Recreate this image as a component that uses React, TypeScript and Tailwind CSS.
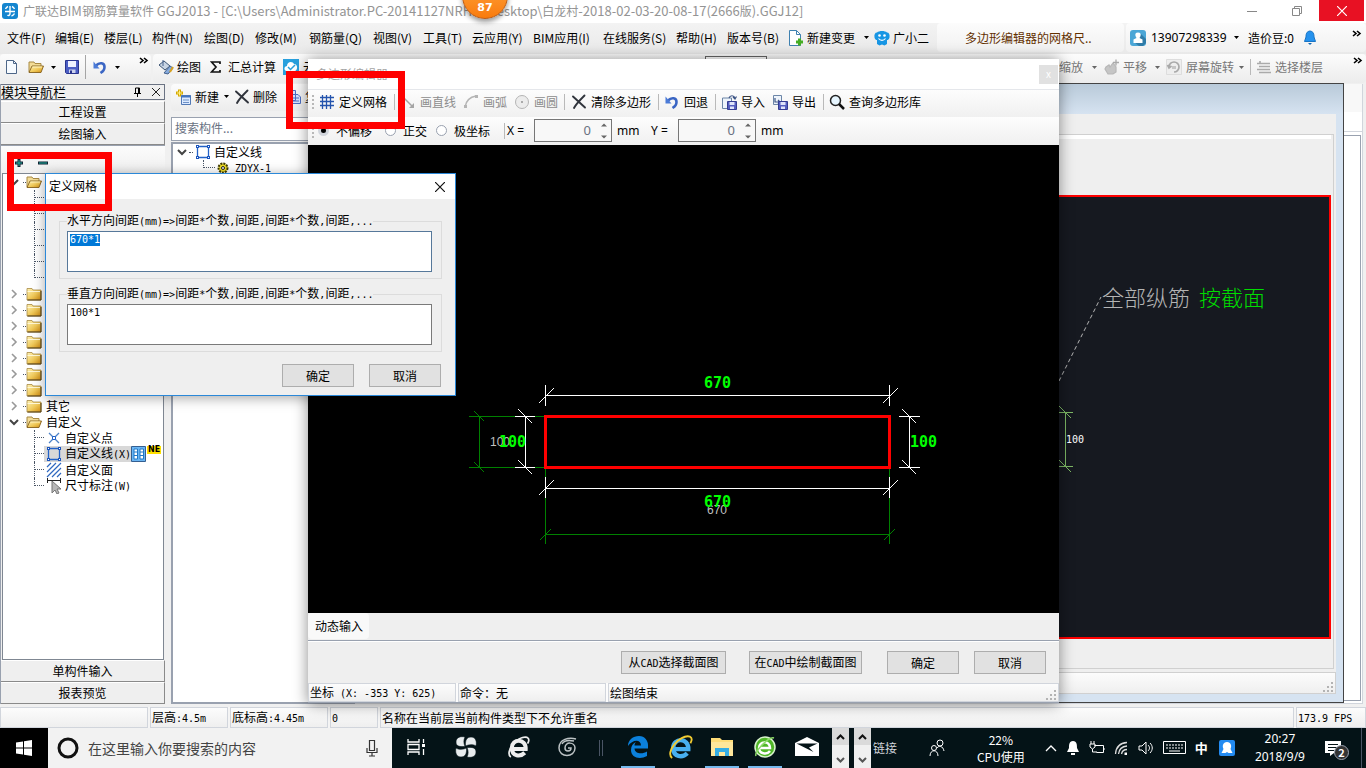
import { useEffect, useRef, type ReactNode } from 'react';

const MONO = "'DejaVu Sans Mono', 'Liberation Mono', monospace";

/* Chinese text with its Latin runs set in a half-width face */
function Song({ text }: { text: string }) {
  return (
    <>
      {text.split(/([\x20-\x7e]+)/).map((part, i) =>
        i % 2 ? (
          <span key={i} className="whitespace-pre font-['DejaVu_Sans_Mono',monospace] text-[10px]">
            {part}
          </span>
        ) : (
          part
        ),
      )}
    </>
  );
}

function Icon({ children, w = 16, h = 16 }: { children: ReactNode; w?: number; h?: number }) {
  return (
    <svg width={w} height={h} viewBox={`0 0 ${w} ${h}`} fill="none" className="shrink-0" aria-hidden="true">
      {children}
    </svg>
  );
}

const Caret = ({ gray = false }: { gray?: boolean }) => (
  <Icon w={7} h={5}>
    <path d="M1 1h5L3.5 4z" fill={gray ? '#666' : '#000'} />
  </Icon>
);
const More = () => (
  <Icon w={10} h={8}>
    <path d="M1 1l3 2.500L1 6M5 1l3 2.500L5 6" stroke="#000" strokeWidth="1.600" />
  </Icon>
);
const Sep = () => <span className="h-4 w-px shrink-0 bg-[#b9b9b9]" />;

const Gradients = () => (
  <svg width="0" height="0" className="absolute" aria-hidden="true">
    <linearGradient id="folder" x1="0" y1="0" x2="1" y2="1">
      <stop offset="0" stopColor="#fff3b8" />
      <stop offset="0.550" stopColor="#efc858" />
      <stop offset="1" stopColor="#cf8a10" />
    </linearGradient>
  </svg>
);

const FolderIcon = () => (
  <Icon>
    <path d="M1 2.500h5l1 1.500h8v10H1z" fill="url(#folder)" stroke="#a88a45" strokeWidth="0.800" />
    <path d="M1.500 5.500H14" stroke="#fff7d5" />
    <path d="M1.500 14h13.500V5" stroke="#4e3b13" />
  </Icon>
);
const FolderOpenIcon = () => (
  <Icon>
    <path d="M1 13V3h5l1 1.500h6V7" fill="#f3dc97" stroke="#a88a45" />
    <path d="M1 13.500L4 7h11.500L13 13.500z" fill="url(#folder)" stroke="#85601c" strokeWidth="0.900" />
    <path d="M4.500 8H14" stroke="#fff2bd" />
  </Icon>
);
const RectIcon = () => (
  <Icon>
    <path d="M2.500 2.500h11v11h-11z" stroke="#2262c8" strokeWidth="1.300" />
    <path d="M1 1h3v3H1zM12 1h3v3h-3zM1 12h3v3H1zM12 12h3v3h-3z" fill="#1b55bd" />
    <path d="M2 2h1v1H2zM13 2h1v1h-1zM2 13h1v1H2zM13 13h1v1h-1z" fill="#fff" />
  </Icon>
);
const UndoIcon = () => (
  <Icon>
    <path d="M4 6.500C7.500 3 12.500 3.500 12.500 8c0 3-1.500 4.500-4 6" stroke="#3b66c4" strokeWidth="2.600" />
    <path d="M1.500 2.500v7h6z" fill="#4b7bd8" />
  </Icon>
);
const CrossIcon = () => (
  <Icon>
    <path d="M2 2.500l12 11M13.500 1.500C9 6 5 10 3 14" stroke="#30343c" strokeWidth="1.900" strokeLinecap="round" />
  </Icon>
);
const DiskIcon = () => (
  <Icon>
    <path d="M1.500 1.500h13v13h-12l-1-1z" fill="#4c5ec4" stroke="#29348e" />
    <path d="M4 2h8v6H4z" fill="#eef1ff" />
    <path d="M5 10.500h6.500V14H5z" fill="#cdd3ee" />
    <path d="M6 11.500h2V14H6z" fill="#29348e" />
  </Icon>
);
const ImportIcon = ({ flip = false }: { flip?: boolean }) => (
  <Icon>
    <path d={flip ? 'M1.500 1.500h8v9h-8z' : 'M1.500 4h9v10.500h-9z'} fill="#eef4fb" stroke="#6c86a8" />
    <path d={flip ? 'M3 4v4h5M6 6l2 2-2 2' : 'M8 4c1-3 5-3 6 0M12 3l2 2 1.500-2.500'} stroke="#3d5585" strokeWidth="1.200" />
    <path d="M6.500 7.500h9v8h-9z" fill="#555fc0" stroke="#343c92" />
    <path d="M8.500 8h5v3h-5zM9 12.500h4V15H9z" fill="#dfe4fa" />
  </Icon>
);
const NewDocIcon = () => (
  <Icon>
    <path d="M2.500 1.500h7l3 3v10h-10z" fill="#f7fbff" stroke="#4d6688" />
    <path d="M9.500 1.500v3h3" stroke="#4d6688" />
  </Icon>
);
const Grip = () => (
  <Icon w={3} h={14}>
    <path d="M0 1h2M0 5h2M0 9h2M0 13h2" stroke="#b8b8b8" strokeWidth="2" />
  </Icon>
);
const SizeGrip = () => (
  <Icon w={12} h={12}>
    <path d="M8 1h2v2H8zM4 5h2v2H4zM8 5h2v2H8zM0 9h2v2H0zM4 9h2v2H4zM8 9h2v2H8z" fill="#b3b3b3" />
  </Icon>
);

const MENUS: [string, string][] = [
  ['文件(F)', 'w-12'],
  ['编辑(E)', 'w-[49px]'],
  ['楼层(L)', 'w-12'],
  ['构件(N)', 'w-[52px]'],
  ['绘图(D)', 'w-[51px]'],
  ['修改(M)', 'w-[54px]'],
  ['钢筋量(Q)', 'w-16'],
  ['视图(V)', 'w-[50px]'],
  ['工具(T)', 'w-[49px]'],
  ['云应用(Y)', 'w-[61px]'],
  ['BIM应用(I)', 'w-[70px]'],
  ['在线服务(S)', 'w-[73px]'],
  ['帮助(H)', 'w-[51px]'],
  ['版本号(B)', 'w-[60px]'],
];

function TitleBar() {
  return (
    <header className="flex h-[23px] items-start bg-white">
      <div className="flex h-[22px] flex-1 items-center gap-[5px] pl-0.5">
        <Icon>
          <rect width="16" height="16" rx="3" fill="#1485cf" />
          <path d="M3 8.500h10M8 3v7.500c0 2-1.500 2.500-2.500 1.500M10 3.500A5 5 0 0 1 12.500 6M6 3.500A5 5 0 0 0 3.500 6M12.500 10.500a5 5 0 0 1-3 2.500" stroke="#fff" strokeWidth="1.400" />
        </Icon>
        <h1 className="whitespace-pre text-[#949494]">
          广联达<span className="text-[13px]">BIM</span>钢筋算量软件
          <span className="text-[13px]">{' GGJ2013 - [C:\\Users\\Administrator.PC-20141127NRHM\\Desktop\\'}</span>
          白龙村<span className="text-[13px]">-2018-02-03-20-08-17(2666</span>版<span className="text-[13px]">).GGJ12]</span>
        </h1>
      </div>
      <button aria-label="最小化" className="flex h-[21px] w-[45px] items-center justify-center">
        <Icon w={10} h={10}><path d="M0 5.500h10" stroke="#888" /></Icon>
      </button>
      <button aria-label="还原" className="flex h-[21px] w-[45px] items-center justify-center">
        <Icon w={10} h={10}><path d="M.5 2.500h7v7h-7zM2.500 2V.5h7v7H8" stroke="#888" /></Icon>
      </button>
      <button aria-label="关闭" className="mr-0.5 flex h-[21px] w-[45px] items-center justify-center bg-[#e81123]">
        <Icon w={10} h={10}><path d="M0 0l10 10M10 0L0 10" stroke="#fff" strokeWidth="1.200" /></Icon>
      </button>
    </header>
  );
}

function MenuBar() {
  return (
    <nav className="flex h-[31px] items-center bg-gradient-to-b from-[#f3f3f3] to-[#e9e9e9] pb-0.5 pl-[7px]">
      {MENUS.map(([label, w]) => (
        <button key={label} className={`${w} shrink-0 whitespace-nowrap text-left`}>{label}</button>
      ))}
      <button className="flex w-[87px] shrink-0 items-center gap-1 whitespace-nowrap">
        <Icon>
          <path d="M2.500.5h7l4 4v11h-11z" fill="#fff" stroke="#3f81b0" />
          <path d="M9.500.5v4h4" stroke="#3f81b0" />
          <path d="M9 12h7M12.500 8.500v7" stroke="#45ad24" strokeWidth="3" />
        </Icon>
        新建变更
        <span className="ml-1"><Caret /></span>
      </button>
      <button className="flex w-[63px] shrink-0 items-center gap-[3px] whitespace-nowrap">
        <Icon>
          <path d="M3 2.500C5 .5 11 .5 13 2.500c2 0 3 2 2.500 5-.5 2-1.500 2.500-2.500 2.500v4l-2.500 1.500L8 14.500l-2.500 1L3 14v-4C2 10 1 9.500.5 7.500 0 4.500 1 2.500 3 2.500z" fill="#1896e4" />
          <circle cx="5.500" cy="5.500" r="1.300" fill="#fff" />
          <circle cx="10.500" cy="5.500" r="1.300" fill="#fff" />
          <path d="M4.500 8.500c2 2.500 5 2.500 7 0" stroke="#fff" strokeWidth="1.200" />
        </Icon>
        广小二
      </button>
      <div className="flex h-full min-w-0 flex-1 items-center rounded bg-gradient-to-b from-[#fcfcfc] to-[#f1f1f1] pl-7 text-[#633000]">
        <a href="#news" className="truncate">多边形编辑器的网格尺..</a>
      </div>
      <div className="ml-0.5 flex h-full w-[240px] shrink-0 items-center rounded bg-gradient-to-b from-[#fcfcfc] to-[#f1f1f1] pl-1 pr-1">
        <Icon>
          <rect width="16" height="16" rx="3" fill="#4ba6d6" />
          <path d="M11 4l5 5v4l-3 3H9l-5-4z" fill="#2f7ca8" />
          <path d="M8 2.500c2.500 0 3 1.500 2.500 3.500L9.500 8l3 1.500V13h-9V9.500l3-1.500-1-2C5 4 5.500 2.500 8 2.500z" fill="#fff" />
        </Icon>
        <button className="ml-[5px] flex w-[97px] items-center justify-between pr-2 font-['Noto_Sans',sans-serif]">13907298339 <Caret /></button>
        <span className="mr-2 whitespace-nowrap">造价豆:0</span>
        <button aria-label="通知">
          <Icon>
            <path d="M8 1c3.500.5 4 3 4 6l1.500 4.500h-11L4 7c0-3 .5-5.500 4-6z" fill="#2592ee" stroke="#1874c5" />
            <path d="M6 13h4l-2 2z" fill="#1367b0" />
          </Icon>
        </button>
        <span className="ml-auto -mt-2"><More /></span>
      </div>
    </nav>
  );
}

function MainToolbar() {
  const strip = 'flex h-[29px] items-center rounded bg-gradient-to-b from-[#fcfcfc] to-[#ececec] pb-[3px]';
  return (
    <div className="flex h-[30px] items-start bg-[#f0f0f0]">
      <div className={`${strip} w-[151px] shrink-0 pl-1`}>
        <button aria-label="新建文件" className="w-6"><NewDocIcon /></button>
        <button aria-label="打开" className="w-[22px]"><FolderOpenIcon /></button>
        <span className="w-3.5"><Caret /></span>
        <button aria-label="保存" className="w-[21px]"><DiskIcon /></button>
        <span className="h-6 w-px bg-[#a5a5a5]" />
        <button aria-label="撤销" className="ml-1.5 w-[22px]"><UndoIcon /></button>
        <Caret />
        <span className="-mt-3 ml-auto mr-0.5"><More /></span>
      </div>
      <div className={`${strip} ml-0.5 flex-1 pl-[5px]`}>
        <button className="flex w-[52px] shrink-0 items-center gap-[3px] whitespace-nowrap">
          <Icon>
            <path d="M1 6l5-4 6 5-5 4z" fill="#c9d5e4" stroke="#3e5675" />
            <path d="M5 1v6M12 7l3 2-5 6-4-1z" stroke="#44618c" fill="#86abdd" />
            <path d="M12 13l3-5" stroke="#d7a220" strokeWidth="2" />
          </Icon>
          绘图
        </button>
        <button className="flex w-[73px] shrink-0 items-center gap-[7px] whitespace-nowrap">
          <Icon w={11} h={12}><path d="M10 3V1H1.500L6 6l-4.500 5H10V9" stroke="#111" strokeWidth="1.700" /></Icon>
          汇总计算
        </button>
        <button className="flex w-14 shrink-0 items-center gap-1 whitespace-nowrap">
          <Icon>
            <rect width="16" height="16" fill="#28a0dd" />
            <path d="M3 12c-3-2-1-5 1-5 0-5 6-5 7-2 4 0 4 6 1 7z" fill="#fff" />
            <path d="M5 8l2.500 2.500L12 6" stroke="#28a0dd" strokeWidth="1.500" />
          </Icon>
          云检查
        </button>
        <select aria-label="楼层" className="ml-[366px] h-[23px] w-[62px] shrink-0 border border-[#666] bg-white" />
        <span className="ml-auto" />
        <button className="w-[45px] whitespace-nowrap text-left text-[#777]">
          <span className="flex items-center justify-between pr-1.5">缩放 <Caret gray /></span>
        </button>
        <button className="flex w-[62px] items-center gap-[3px] whitespace-nowrap text-[#777]">
          <Icon>
            <path d="M2 8l3-2 1 2 3-4 3 4v5l-3 2H4l-3-5z" fill="#c5c5c5" stroke="#b7b7b7" strokeWidth="1.200" />
            <path d="M12 .5v6M9 3.500h6" stroke="#a9a9a9" strokeWidth="1.300" />
          </Icon>
          平移 <span className="ml-1"><Caret gray /></span>
        </button>
        <button className="flex w-[84px] items-center gap-1 whitespace-nowrap text-[#777]">
          <Icon>
            <path d="M.5.5h15v15H.5z" fill="#eee" stroke="#ddd" />
            <path d="M3 8a5 5 0 1 1 5 5M1.500 6L3 9l2.500-2" stroke="#a9a9a9" strokeWidth="1.700" />
            <path d="M6 7h4v3H6z" fill="#c5c5c5" />
          </Icon>
          屏幕旋转 <Caret gray />
        </button>
        <Sep />
        <button className="ml-1.5 flex w-[96px] items-center gap-1 whitespace-nowrap text-[#777]">
          <Icon w={14} h={16}><path d="M0 4.500h13M2 7.500h11M0 10.500h13M2 13.500h12M3 4V2" stroke="#aaa" strokeWidth="1.600" /></Icon>
          选择楼层
        </button>
        <span className="-mt-3 mr-[3px]"><More /></span>
      </div>
    </div>
  );
}

function NavButton({ children }: { children: ReactNode }) {
  return (
    <button className="h-[22px] border-b border-r border-[#8a8a8a] border-t border-t-white bg-[#efefef] text-center leading-5">
      {children}
    </button>
  );
}

const Chevron = ({ open }: { open: boolean }) => (
  <Icon w={10} h={10}>
    {open ? <path d="M1 3l4 4 4-4" stroke="#444" strokeWidth="2" /> : <path d="M3 1l4 4-4 4" stroke="#999" strokeWidth="1.600" />}
  </Icon>
);

function FolderRow({ open = false, label = '' }: { open?: boolean; label?: string }) {
  return (
    <div className="flex h-4 items-center pl-1.5">
      <Chevron open={open} />
      <span className="ml-1 w-[3px] border-b border-dotted border-gray-600" />
      {open ? <FolderOpenIcon /> : <FolderIcon />}
      <span className="ml-1">{label}</span>
    </div>
  );
}

function ChildRow({ icon, label, selected = false, last = false, children }: {
  icon?: ReactNode; label?: string; selected?: boolean; last?: boolean; children?: ReactNode;
}) {
  return (
    <div className="flex h-4 pl-[31px]">
      <span className={`w-[10px] border-l border-dotted border-gray-600 ${last ? 'h-2' : 'h-4'}`}>
        <span className="block h-2 border-b border-dotted border-gray-600" />
      </span>
      {icon && (
        <span className={`flex items-center gap-[3px] whitespace-nowrap pl-0.5 ${selected ? 'bg-[#d8d8d8]' : ''}`}>
          {icon}
          <span><Song text={label ?? ''} /></span>
        </span>
      )}
      {children}
    </div>
  );
}

function Navigator() {
  return (
    <aside className="flex w-[165px] shrink-0 flex-col border-l border-gray-400 bg-[#efefef]">
      <div className="mb-px flex h-4 items-center justify-between border border-l-0 border-gray-500 pr-1">
        <h2 className="whitespace-nowrap text-[13px] leading-4">模块导航栏</h2>
        <span className="flex items-center gap-2.5">
          <Icon w={10} h={10}><path d="M2 6.500h7M3.500 6V1h4v5M5.500 7v3M6.500 1v5" stroke="#000" /></Icon>
          <Icon w={8} h={8}><path d="M0 0l8 8M8 0L0 8" stroke="#222" /></Icon>
        </span>
      </div>
      <NavButton>工程设置</NavButton>
      <NavButton>绘图输入</NavButton>
      <div className="flex h-7 items-center gap-3.5 border-t border-gray-400 bg-gradient-to-b from-[#fcfcfc] to-[#efefef] pl-[13px] pt-1.5">
        <button aria-label="展开"><Icon w={10} h={10}><path d="M1 5h8M5 1v8" stroke="#123" strokeWidth="3" /><path d="M2 5h6M5 2v6" stroke="#20b2a0" /></Icon></button>
        <button aria-label="折叠"><Icon w={10} h={10}><path d="M0 5h10" stroke="#123" strokeWidth="3" /><path d="M1 5h8" stroke="#20b2a0" /></Icon></button>
      </div>
      <div className="mx-px flex-1 border border-[#7f8792] bg-white">
        <FolderRow open />
        <ChildRow /><ChildRow /><ChildRow /><ChildRow /><ChildRow /><ChildRow last />
        <FolderRow /><FolderRow /><FolderRow /><FolderRow /><FolderRow /><FolderRow /><FolderRow />
        <FolderRow label="其它" />
        <FolderRow open label="自定义" />
        <ChildRow
          label="自定义点"
          icon={<Icon><path d="M3 3l10 10M13 3L3 13" stroke="#4e83c6" strokeWidth="1.300" /><path d="M6.500 6.500h3v3h-3z" fill="#fff" stroke="#2262c8" /></Icon>}
        />
        <ChildRow label="自定义线(X)" selected icon={<RectIcon />}>
          <Icon>
            <path d="M.5.5h14v15H.5z" fill="#6ab5f3" stroke="#345f91" />
            <path d="M3 3h3.500v10H3zM9 3h3.500v10H9z" fill="#fff" stroke="#2078c8" />
            <path d="M3 6h3.500M3 9.500h3.500M9 6h3.500M9 9.500h3.500" stroke="#2078c8" />
          </Icon>
          <span className="h-2 bg-[#ffe000] px-px font-['DejaVu_Sans',sans-serif] text-[8px] font-bold leading-2">NE</span>
        </ChildRow>
        <ChildRow label="自定义面" icon={<Icon><path d="M1 5l4-4M1 10l9-9M1 15L15 1M6 15l9-9M11 15l4-4" stroke="#2e68c0" strokeWidth="1.200" /></Icon>} />
        <ChildRow
          label="尺寸标注(W)"
          last
          icon={
            <Icon>
              <path d="M1 2.500h14M1.500 0v5M14.500 0v5" stroke="#222" />
              <path d="M6 3v12l3-3 2 4 2-1-2-4h4z" fill="#b8b8b8" stroke="#777" />
            </Icon>
          }
        />
      </div>
      <NavButton>单构件输入</NavButton>
      <NavButton>报表预览</NavButton>
    </aside>
  );
}

function ComponentList() {
  return (
    <section className="ml-1.5 flex w-[184px] shrink-0 flex-col">
      <div className="flex h-[27px] items-center whitespace-nowrap rounded bg-gradient-to-b from-[#fcfcfc] to-[#ececec] pb-0.5 pl-1">
        <button className="flex w-[59px] items-center gap-1">
          <Icon>
            <path d="M6.500 6.500h9v9h-9z" fill="#dceaff" stroke="#5279b5" />
            <path d="M6 7.500h10" stroke="#4374c1" strokeWidth="2" />
            <path d="M8 11h6M8 13.500h6" stroke="#6d91c7" />
            <path d="M1 4h7M4.500.5v7" stroke="#d5a900" strokeWidth="3" />
            <path d="M2 4h5M4.500 1.500v5" stroke="#fff08a" />
          </Icon>
          新建<Caret />
        </button>
        <button className="flex w-[52px] items-center gap-[3px]"><CrossIcon />删除</button>
        <button className="flex items-center gap-[3px]">
          <Icon><path d="M1.500 1.500h8v10h-8zM5.500 5.500H12l2.500 2.500v6.500h-9z" fill="#d6e4ff" stroke="#4c6fc2" /><path d="M7 9h6M7 12h6" stroke="#4c6fc2" /></Icon>
          复制
        </button>
      </div>
      <input
        aria-label="搜索构件"
        placeholder="搜索构件..."
        className="mt-1.5 h-6 border border-gray-400 bg-white px-[3px] pb-1 placeholder:text-gray-500"
      />
      <div className="mt-px flex-1 border-2 border-gray-400 bg-white">
        <div className="flex h-4 items-center gap-[3px] pl-1">
          <Chevron open />
          <span className="-mx-px w-1 border-b border-dotted border-gray-600" />
          <RectIcon />自定义线
        </div>
        <div className="flex h-4 items-center pl-[30px]">
          <span className="mb-2 h-2 w-3 border-b border-l border-dotted border-gray-600" />
          <Icon>
            <circle cx="8" cy="8" r="4.500" fill="#eedc24" stroke="#403b00" strokeWidth="2" strokeDasharray="2 1" />
            <circle cx="8" cy="8" r="1.500" fill="#fff" stroke="#222" />
          </Icon>
          <span className="ml-1"><Song text="ZDYX-1" /></span>
        </div>
      </div>
    </section>
  );
}

function SectionWindow() {
  return (
    <section className="absolute bottom-px left-[600px] right-[22px] top-[-1px] flex flex-col border border-[#444] bg-[#d6e3f1] pb-2 pr-[7px]">
      <div className="-mr-[7px] h-[30px] shrink-0 bg-gradient-to-b from-[#b9cad9] to-[#d6e3f1]" />
      <div className="flex flex-1 flex-col bg-[#efefef]">
        <div className="mr-0.5 mt-5 flex flex-1 flex-col border-b border-r border-t border-[#d0d0d0] pb-[29px] pr-0.5">
          <div className="h-[60px] border-t-4 border-white" />
          <div className="flex flex-1 justify-end overflow-hidden border-2 border-[#ff0000] bg-[#161920]">
            <svg width="270" height="440" viewBox="1059 197 270 440" fill="none" aria-label="截面图">
              <path d="M1059 381L1101 297" stroke="#b5b5b5" strokeDasharray="4 3" />
              <path d="M1065.500 412v54M1059 412.500h14M1059 466.500h14M1059 406l12 12M1059 460l12 12" stroke="#7db865" />
              <text x="1066" y="443" fill="#fff" fontSize="10" fontFamily={MONO}>100</text>
              <text x="1102" y="306" fill="#b4b4b4" fontSize="22" fontWeight="300" fontFamily="'Noto Sans CJK SC', sans-serif">全部纵筋</text>
              <text x="1199" y="306" fill="#00dc00" fontSize="22" fontWeight="300" fontFamily="'Noto Sans CJK SC', sans-serif">按截面</text>
            </svg>
          </div>
        </div>
        <div className="mt-[3px] flex h-[22px] items-end justify-end border border-[#d0d0d0] bg-gradient-to-b from-[#fcfcfc] to-[#efefef]">
          <SizeGrip />
        </div>
      </div>
    </section>
  );
}

function Tool({ icon, label, w, disabled = false }: { icon: ReactNode; label: string; w: string; disabled?: boolean }) {
  return (
    <button disabled={disabled} className={`flex shrink-0 items-center gap-1 whitespace-nowrap ${w} ${disabled ? 'text-[#8c8c8c]' : ''}`}>
      {icon}
      {label}
    </button>
  );
}

function Coord({ axis }: { axis: string }) {
  return (
    <div className="flex items-center font-['Noto_Sans',sans-serif] text-[12px]">
      <label htmlFor={`coord-${axis}`} className="w-[27px] whitespace-nowrap">{axis} =</label>
      <span className="flex h-[23px] w-[78px] items-center border border-[#767676] bg-[#f8f8f8] pr-1">
        <input id={`coord-${axis}`} defaultValue="0" className="w-0 min-w-0 flex-1 bg-transparent pb-px pr-2.5 text-right text-[13px] text-gray-500" />
        <Icon w={6} h={16}><path d="M0 3.500h6L3 .5zM0 12.500h6l-3 3z" fill="#666" /></Icon>
      </span>
      <span className="ml-[5px] w-[34px]">mm</span>
    </div>
  );
}

function DrawingCanvas() {
  return (
    <svg width="751" height="468" viewBox="308 145 751 468" fill="none" className="block bg-black" aria-label="多边形">
      <g stroke="#008000">
        <path shapeRendering="crispEdges" d="M469 416.500h77M469 467.500h77M479.500 416v52M545.500 468v76M889.500 468v76M545 534.500h345" />
        <path d="M474 411l10 10M474 462l10 10M540 540l11-11M884 540l11-11" />
      </g>
      <text x="490" y="446" fill="#c0c0c0" fontSize="12" fontFamily="'Liberation Sans', sans-serif">100</text>
      <text x="707" y="514" fill="#c0c0c0" fontSize="12" fontFamily="'Liberation Sans', sans-serif">670</text>
      <g stroke="#fff">
        <path shapeRendering="crispEdges" d="M545 395.500h345M545.500 385v21M889.500 385v21M545 488.500h345M545.500 477v21M889.500 477v21M525.500 416v52M515 416.500h20M515 467.500h20M909.500 416v52M899 416.500h21M899 467.500h21" />
        <path d="M539 403l15-15M883 403l15-15M539 495l15-15M883 495l15-15M518 409l14 14M518 460l14 14M902 409l14 14M902 460l14 14" />
      </g>
      <path shapeRendering="crispEdges" d="M545.500 416.500h344v51h-344z" stroke="#f00" strokeWidth="3" />
      <g fill="#0f0" fontSize="15" fontWeight="700" fontFamily={MONO}>
        <text x="704" y="388">670</text>
        <text x="704" y="507">670</text>
        <text x="499" y="447">100</text>
        <text x="910" y="447">100</text>
      </g>
    </svg>
  );
}

const PUSH = 'h-[23px] shrink-0 border border-[#adadad] bg-[#e1e1e1] text-center leading-5 whitespace-nowrap';

function PolygonEditor() {
  const strip = 'flex items-center bg-gradient-to-b from-[#fdfdfd] to-[#f0f0f0]';
  return (
    <section className="absolute left-[308px] top-[59px] z-10 w-[751px] bg-[#efefef] shadow-[0_1px_14px_rgba(0,0,0,0.45)]">
      <div className="flex h-[30px] items-center justify-between bg-white pl-2 pr-px">
        <h2 className="text-[#a5a5a5]">多边形编辑器</h2>
        <button aria-label="关闭多边形编辑器" className="h-[19px] w-[19px] bg-[#e1e1e1] text-[10px] leading-4 text-white">x</button>
      </div>
      <div className={`${strip} h-7 border-t border-gray-200 pb-[3px] pl-1`}>
        <Grip />
        <span className="w-1" />
        <Tool w="w-[75px]" label="定义网格" icon={<Icon><path d="M1 3.500h14M1 7.500h14M1 11.500h14M3.500 1v14M7.500 1v14M11.500 1v14" stroke="#2454ad" strokeWidth="1.300" /></Icon>} />
        <Sep />
        <span className="w-[5px]" />
        <Tool disabled w="w-[63px]" label="画直线" icon={<Icon><path d="M3 3l9 9" stroke="#a5a5a5" strokeWidth="1.500" /><path d="M14 14v-5l-5 5z" fill="#a5a5a5" /></Icon>} />
        <Tool disabled w="w-[51px]" label="画弧" icon={<Icon><path d="M2 13C3 7 7 3 13 2" stroke="#b5b5b5" strokeWidth="1.500" /><path d="M1 11h3v3H1zM12 1h3v3h-3z" fill="#b5b5b5" /></Icon>} />
        <Tool disabled w="w-[50px]" label="画圆" icon={<Icon><circle cx="8" cy="8" r="6.500" fill="#ececec" stroke="#b5b5b5" /><path d="M7 7h2v2H7z" fill="#aaa" /></Icon>} />
        <Sep />
        <span className="w-1.5" />
        <Tool w="w-[87px]" label="清除多边形" icon={<CrossIcon />} />
        <Sep />
        <span className="w-[5px]" />
        <Tool w="w-[51px]" label="回退" icon={<UndoIcon />} />
        <Sep />
        <span className="w-[5px]" />
        <Tool w="w-[51px]" label="导入" icon={<ImportIcon />} />
        <Tool w="w-[51px]" label="导出" icon={<ImportIcon flip />} />
        <Sep />
        <span className="w-[5px]" />
        <Tool w="w-[92px]" label="查询多边形库" icon={<Icon><circle cx="6.500" cy="6.500" r="5" fill="#e7f6ff" stroke="#222" strokeWidth="1.500" /><path d="M10 10l5 5" stroke="#111" strokeWidth="2.500" /></Icon>} />
      </div>
      <div className={`${strip} h-7 pb-px pl-1`}>
        <Grip />
        <fieldset className="flex w-[189px] items-center pl-[3px]">
          {([['不偏移', 'w-[67px]'], ['正交', 'w-[51px]'], ['极坐标', 'w-14']] as const).map(([label, w], i) => (
            <label key={label} className={`${w} flex items-center gap-[7px] whitespace-nowrap`}>
              <input
                type="radio"
                name="offset"
                defaultChecked={i === 0}
                className="size-[11px] appearance-none rounded-full border border-gray-400 bg-white checked:border-[3px] checked:border-gray-300 checked:bg-black"
              />
              {label}
            </label>
          ))}
        </fieldset>
        <Sep />
        <span className="w-0.5" />
        <Coord axis="X" />
        <Coord axis="Y" />
      </div>
      <DrawingCanvas />
      <div className="flex h-7 items-start border-b border-gray-400">
        <button className="h-[26px] w-[61px] rounded bg-[#f9f9f9] pl-px">动态输入</button>
      </div>
      <div className="flex h-[42px] items-center justify-end border-t border-white pr-[13px]">
        <button className={`${PUSH} w-[105px]`}><Song text="从CAD选择截面图" /></button>
        <button className={`${PUSH} ml-[23px] w-[113px]`}><Song text="在CAD中绘制截面图" /></button>
        <button className={`${PUSH} ml-[25px] w-[72px]`}>确定</button>
        <button className={`${PUSH} ml-[15px] w-[72px]`}>取消</button>
      </div>
      <div className="flex h-5 gap-0.5 border-b border-gray-400 bg-[#fcfcfc]">
        <StatusCell w="w-[148px]" text="坐标 (X: -353 Y: 625)" />
        <StatusCell w="w-[148px]" text="命令：无" />
        <StatusCell w="flex-1" text="绘图结束"><SizeGrip /></StatusCell>
      </div>
    </section>
  );
}

function StatusCell({ w, text, children }: { w: string; text: string; children?: ReactNode }) {
  return (
    <div className={`${w} flex items-center justify-between whitespace-nowrap border border-gray-300 bg-gradient-to-b from-[#fcfcfc] to-[#efefef] pl-px`}>
      <span><Song text={text} /></span>
      {children && <span className="self-end">{children}</span>}
    </div>
  );
}

function GridDialog() {
  const first = useRef<HTMLTextAreaElement>(null);
  useEffect(() => {
    first.current?.focus();
    first.current?.select();
  }, []);
  const area =
    "block h-[41px] w-full resize-none border bg-white px-0.5 pt-0.5 font-['DejaVu_Sans_Mono',monospace] text-[10px] leading-3 outline-none selection:bg-[#0078d7] selection:text-white";
  const group = 'relative h-[58px] border border-[#dcdcdc] pl-[7px] pr-[9px] pt-[9px]';
  const legend = 'absolute -top-2.5 left-[7px] h-4 whitespace-nowrap bg-[#efefef] leading-4';
  return (
    <section role="dialog" aria-label="定义网格" className="absolute left-[45px] top-[173px] z-20 w-[411px] border border-[#2b88d8] bg-[#efefef] shadow-[0_2px_12px_rgba(0,0,0,0.35)]">
      <div className="flex h-[25px] items-center justify-between bg-white pl-[3px] pr-2.5">
        <h2 className="pb-0.5">定义网格</h2>
        <button aria-label="关闭对话框"><Icon w={10} h={10}><path d="M0 0l10 10M10 0L0 10" stroke="#111" strokeWidth="1.200" /></Icon></button>
      </div>
      <div className="flex flex-col gap-[15px] px-[13px] pt-[22px]">
        <div className={group}>
          <label htmlFor="grid-h" className={legend}><Song text="水平方向间距(mm)=>间距*个数,间距,间距*个数,间距,..." /></label>
          <textarea id="grid-h" ref={first} defaultValue="670*1" className={`${area} border-[#56789a] caret-orange-500`} />
        </div>
        <div className={group}>
          <label htmlFor="grid-v" className={legend}><Song text="垂直方向间距(mm)=>间距*个数,间距,间距*个数,间距,..." /></label>
          <textarea id="grid-v" defaultValue="100*1" className={`${area} border-[#7a7a7a]`} />
        </div>
      </div>
      <div className="flex justify-end gap-[15px] pb-2 pr-3.5 pt-3">
        <button className={`${PUSH} w-[72px]`}>确定</button>
        <button className={`${PUSH} w-[72px]`}>取消</button>
      </div>
    </section>
  );
}

function StatusBar() {
  return (
    <footer className="mt-[3px] flex h-[21px] gap-0.5 bg-[#f4f4f4]">
      <StatusCell w="w-[148px]" text="" />
      <StatusCell w="w-[78px]" text="层高:4.5m" />
      <StatusCell w="w-[98px]" text="底标高:4.45m" />
      <StatusCell w="w-12" text="0" />
      <StatusCell w="flex-1" text="名称在当前层当前构件类型下不允许重名" />
      <StatusCell w="w-[70px]" text="173.9 FPS" />
    </footer>
  );
}

function TaskIcon({ children, w, active = false, label }: { children: ReactNode; w: string; active?: boolean; label: string }) {
  return (
    <button aria-label={label} className={`${w} flex h-10 shrink-0 flex-col items-center justify-end`}>
      <span className="flex h-[38px] items-center">{children}</span>
      <span className={`h-0.5 w-[34px] ${active ? 'bg-[#76b9ed]' : ''}`} />
    </button>
  );
}

const BrowserE = ({ color, ring, w = 24 }: { color: string; ring?: string; w?: number }) => (
  <svg width={w} height={w} viewBox="0 0 24 24" fill="none" aria-hidden="true">
    <path d="M6 13.500h13.500c.5-11.500-14.500-11-14.500-1 0 9 9 9.500 13.500 5" stroke={color} strokeWidth="4.200" />
    {ring && <path d="M4 22C-3 17 11-1 21 1.500c2.500 1 2 4 .5 6.500" stroke={ring} strokeWidth="1.800" />}
  </svg>
);

const EdgeLogo = () => (
  <svg width="22" height="22" viewBox="0 0 22 22" aria-hidden="true">
    <path d="M1 10C1 4 6 0 12 0c6 0 9 5 9 9v3.500H7.500c.5 5.500 8 6 12.500 3V20c-7 4-16 2-16-6 0-4 2-6.500 5-8-1 1-1.500 2-1.500 3.500H14c0-7-9-6-13 .5z" fill="#0b80dc" />
  </svg>
);

function Scroller() {
  return (
    <span className="flex h-10 w-[17px] flex-col bg-[#f0f0f0]">
      <button aria-label="向上" className="flex h-[17px] items-center justify-center bg-[#dadada]"><Icon w={9} h={6}><path d="M1 5l3.500-3.500L8 5" stroke="#111" strokeWidth="2" /></Icon></button>
      <button aria-label="向下" className="mt-auto flex h-[17px] items-center justify-center"><Icon w={9} h={6}><path d="M1 1l3.500 3.500L8 1" stroke="#555" strokeWidth="2" /></Icon></button>
    </span>
  );
}

function Taskbar() {
  return (
    <div className="flex h-10 items-center bg-[#041317] text-white">
      <button aria-label="开始" className="flex h-10 w-12 shrink-0 items-center justify-center bg-black">
        <Icon><path d="M0 2.500l7-1v6H0zM8 1.300L16 0v7.500H8zM0 8.500h7v6l-7-1zM8 8.500h8V16l-8-1.300z" fill="#fff" /></Icon>
      </button>
      <div className="flex h-10 w-[344px] shrink-0 items-center bg-[#f2f2f2] pl-[9px] pr-3.5">
        <Icon w={22} h={22}><circle cx="11" cy="11" r="9" stroke="#111" strokeWidth="3" /></Icon>
        <input aria-label="搜索" placeholder="在这里输入你要搜索的内容" className="ml-[9px] min-w-0 flex-1 bg-transparent text-[14px] text-gray-800 placeholder:text-[#444]" />
        <Icon w={12} h={18}><path d="M3.500 1.500h5v10h-5zM1 9v4.500h10V9M6 13.500V17M3 17h6" stroke="#333" strokeWidth="1.200" /></Icon>
      </div>
      <TaskIcon w="w-12" label="任务视图"><Icon w={18} h={16}><path d="M1 0v3h11V0M1 16v-3h11v3M1 5.500h11v5H1zM16.500 0v4M16.500 10v6" stroke="#fff" strokeWidth="1.300" /><path d="M15 5h3v3h-3z" fill="#fff" /></Icon></TaskIcon>
      <TaskIcon w="w-[52px]" label="浏览器">
        <Icon w={22} h={22}>
          <path d="M10 1C6 0 1 1 1 6c0 4 3 5 9 4.500C8.500 7 8.500 4 10 1zM21 10c1-4 0-9-5-9-4 0-6 3-5.500 9C14 8.500 18 8 21 10zM12 21c4 1 9 0 9-5 0-4-3-5-9-4.500 1.500 3.500 1.500 6.500 0 9.500zM1 12c-1 4 0 9 5 9 4 0 6-3 5.500-9C8 13.500 4 14 1 12z" fill="#e8ecee" stroke="#041317" strokeWidth="0.600" />
        </Icon>
      </TaskIcon>
      <TaskIcon w="w-[52px]" label="E 浏览器"><BrowserE color="#eee" ring="#eee" w={23} /></TaskIcon>
      <TaskIcon w="w-[46px]" label="G 浏览器">
        <Icon w={20} h={20}><path d="M19 2c-7-2-17 0-17 9 0 10 16 10 16 0 0-6-10-7-10 0 0 4 6 4 6 0h-3M17 4c-5-1-10-1-12 3" stroke="#bcc2c4" strokeWidth="1.500" /></Icon>
      </TaskIcon>
      <span className="flex w-[22px] justify-center gap-0.5"><span className="h-4 w-px bg-gray-600" /><span className="h-4 w-px bg-gray-600" /></span>
      <TaskIcon w="w-[52px]" active label="Edge"><EdgeLogo /></TaskIcon>
      <TaskIcon w="w-8" label="Internet Explorer"><BrowserE color="#48aff0" ring="#f1cb32" w={25} /></TaskIcon>
      <TaskIcon w="w-[52px]" active label="文件资源管理器">
        <Icon w={22} h={20}><path d="M0 1h9l2 2h11v16H0z" fill="#ffdd78" /><path d="M0 5h22v14H0z" fill="#ffe79b" /><path d="M4 19v-8h14v8h-4v-4H8v4z" fill="#35ade4" /></Icon>
      </TaskIcon>
      <TaskIcon w="w-[34px]" active label="360 浏览器">
        <Icon w={22} h={22}><circle cx="11" cy="11" r="10" fill="#50b728" stroke="#d9f3cd" strokeWidth="1.500" /><path d="M6 12h10c0-8-11-7-11 0 0 6 8 7 11 3" stroke="#fff" strokeWidth="2.500" /><path d="M2 20C0 16 15 0 20 2" stroke="#8edc6a" strokeWidth="1.500" /></Icon>
      </TaskIcon>
      <TaskIcon w="w-[50px]" label="邮件"><Icon w={24} h={20}><path d="M0 6l12-6 12 6v13H0z" fill="#fff" /><path d="M1.500 6.500h21L14 10.500l4.500 4.500z" fill="#041317" /></Icon></TaskIcon>
      <Scroller />
      <span className="w-[5px]" />
      <Scroller />
      <span className="ml-0.5 whitespace-nowrap text-gray-300">链接</span>
      <span className="min-w-0 flex-1" />
      <Icon w={16} h={18}><circle cx="11" cy="4" r="3" stroke="#fff" /><circle cx="5" cy="9" r="2.500" stroke="#fff" /><path d="M1 17c0-7 8-7 8 0M8 9c2-3 6-2 7 3" stroke="#fff" /></Icon>
      <span className="ml-3 w-[88px] text-center leading-[17px]">22%<br />CPU使用</span>
      <span className="flex w-[163px] shrink-0 items-center justify-between">
        <Icon w={12} h={8}><path d="M1 7l5-5 5 5" stroke="#fff" strokeWidth="1.300" /></Icon>
        <Icon w={14} h={16}><path d="M7 1c4 0 4 4 4 7l2 4H1l2-4c0-3 0-7 4-7zM5 13h4v2H5z" fill="#fff" /></Icon>
        <Icon w={16} h={14}><path d="M5.500 4.500h9v7h-7M15 7v2M1 3h5v3L3.500 8 1 6zM2 0v3M5 0v3M3.500 8v3H8" stroke="#fff" /></Icon>
        <Icon w={14} h={14}><path d="M1.500 13C2 6 6 2 13 1.500M4.500 13C5 8.500 8 5.500 13 5M7.500 13c.5-2.500 2.500-4.500 5.500-4.500" stroke="#ddd" strokeWidth="1.300" /><path d="M10.500 11.500H13V14h-2.500z" fill="#fff" /></Icon>
        <Icon w={16} h={14}><path d="M1 5h3l4-4v12L4 9H1zM10 4c2 2 2 4 0 6M12 2c3 3 3 7 0 10" stroke="#fff" /></Icon>
        <Icon w={23} h={14}><path d="M.5.5h22v12H.5z" stroke="#fff" /><path d="M3 4h17M3 7h17" stroke="#fff" strokeDasharray="2 1" /><path d="M6 10h11" stroke="#fff" /></Icon>
        <span className="text-[13px] font-bold">中</span>
      </span>
      <span className="ml-[11px] flex">
        <Icon><rect width="16" height="16" rx="2" fill="#238bf1" /><path d="M8 2c4 0 5 4 3.500 7l2 4H9.500L8 12l-1.500 1h-4l2-4C3 6 4 2 8 2z" fill="#fff" /></Icon>
      </span>
      <span className="mx-5 whitespace-nowrap text-center font-['Noto_Sans',sans-serif] leading-[18px]">20:27<br />2018/9/9</span>
      <button aria-label="2 条通知" className="relative mr-3 h-6 w-6 shrink-0">
        <Icon w={16} h={16}><path d="M0 1h16v12H9l-4 3v-3H0z" fill="#fff" /><path d="M3 4.500h10M3 7.500h10M3 10.500h6" stroke="#041317" /></Icon>
        <span className="absolute bottom-0 right-0 size-[15px] rounded-full border border-gray-400 bg-[#333] text-center text-[11px] font-bold leading-3">2</span>
      </button>
      <span className="h-10 w-[5px] border-l border-gray-600" />
    </div>
  );
}

export default function App() {
  return (
    <div className="relative flex min-h-screen w-full flex-col overflow-hidden bg-[#f0f0f0] font-['Noto_Sans_CJK_SC',sans-serif] text-[12px] leading-4 text-black">
      <Gradients />
      <TitleBar />
      <MenuBar />
      <MainToolbar />
      <main className="relative flex min-h-[620px] flex-1">
        <Navigator />
        <ComponentList />
        <div className="mr-[3px] flex flex-1 flex-col border-b border-r border-gray-300 bg-white">
          <div className="h-7 bg-[#f8f8f8]" />
          <div className="h-5 border-b border-gray-300" />
          <div className="mb-0.5 mr-px mt-[3px] flex-1 border border-gray-400" />
        </div>
        <SectionWindow />
      </main>
      <StatusBar />
      <Taskbar />
      <PolygonEditor />
      <GridDialog />
      <div className="pointer-events-none absolute left-[286px] top-[71px] z-30 h-[58px] w-[119px] border-[7px] border-[#ff0000]" />
      <div className="pointer-events-none absolute left-[7px] top-[152px] z-30 h-[59px] w-[105px] border-[7px] border-[#ff0000]" />
      <div className="absolute left-[462px] top-[-27px] z-30 flex size-[46px] items-end justify-center rounded-full border border-[#b75a16] bg-gradient-to-b from-[#ffab3c] to-[#f97b0b] pb-0.5 font-['DejaVu_Sans',sans-serif] text-[11px] font-bold text-white shadow-[0_3px_5px_rgba(0,0,0,0.4)]">
        87
      </div>
    </div>
  );
}
